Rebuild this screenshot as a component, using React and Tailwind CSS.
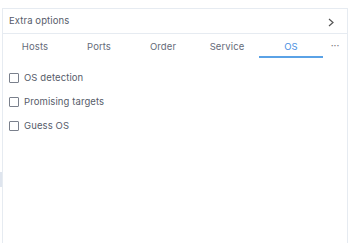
import React, { useState } from 'react'

const tabs = ['Hosts', 'Ports', 'Order', 'Service', 'OS']
const options = ['OS detection', 'Promising targets', 'Guess OS']

export default function App() {
  const [active, setActive] = useState('OS')
  const [checked, setChecked] = useState({})

  return (
    <div className="relative w-[350px] h-[243px] bg-white pt-2 pl-[2px] pr-[2px] overflow-hidden" style={{ fontFamily: 'Inter, "Noto Sans", sans-serif' }}>
      {/* side handle */}
      <div className="absolute left-0 top-[172px] w-[2px] h-[15px] bg-[#dfe5ee]" />
      <div className="h-full border-t border-l border-r border-[#e6ebf1] flex flex-col">
        {/* Header */}
        <div className="h-[25px] flex items-center justify-between pl-[6px] pr-[12px] border-b border-[#e6ebf1]">
          <span className="text-[9.5px] tracking-[0.1px] text-[#565c6a] pt-[1px]">Extra options</span>
          <svg width="8" height="9" viewBox="0 0 8 9" className="text-[#555] mt-[2px]">
            <path d="M2 1l4 3.5L2 8" fill="none" stroke="currentColor" strokeWidth="1.2" />
          </svg>
        </div>

        {/* Tabs */}
        <div className="flex h-[24px]">
          {tabs.map(t => (
            <button
              key={t}
              onClick={() => setActive(t)}
              className={`w-[64px] flex items-center justify-center text-[9.5px] tracking-[0.1px] pt-[4px] border-b-2 ${
                active === t ? 'text-[#4a90e2] border-[#5aa2e6]' : 'text-[#656b79] border-transparent'
              }`}
            >
              {t}
            </button>
          ))}
          <div className="flex-1 flex items-center justify-center text-[#777] text-[10px] pb-[1px]">···</div>
        </div>

        {/* Options */}
        <div className="flex flex-col gap-[10px] pt-[13px] pl-[6px]">
          {options.map(o => (
            <label key={o} className="flex items-center gap-[5px] h-[14px] cursor-pointer">
              <input
                type="checkbox"
                checked={!!checked[o]}
                onChange={() => setChecked(c => ({ ...c, [o]: !c[o] }))}
                className="appearance-none w-[10px] h-[10px] border border-[#7a808c] rounded-[1px] bg-white checked:bg-[#4a90e2]"
              />
              <span className="text-[9.5px] tracking-[0.1px] text-[#565c6a] pt-[1px]">{o}</span>
            </label>
          ))}
        </div>
      </div>
    </div>
  )
}
